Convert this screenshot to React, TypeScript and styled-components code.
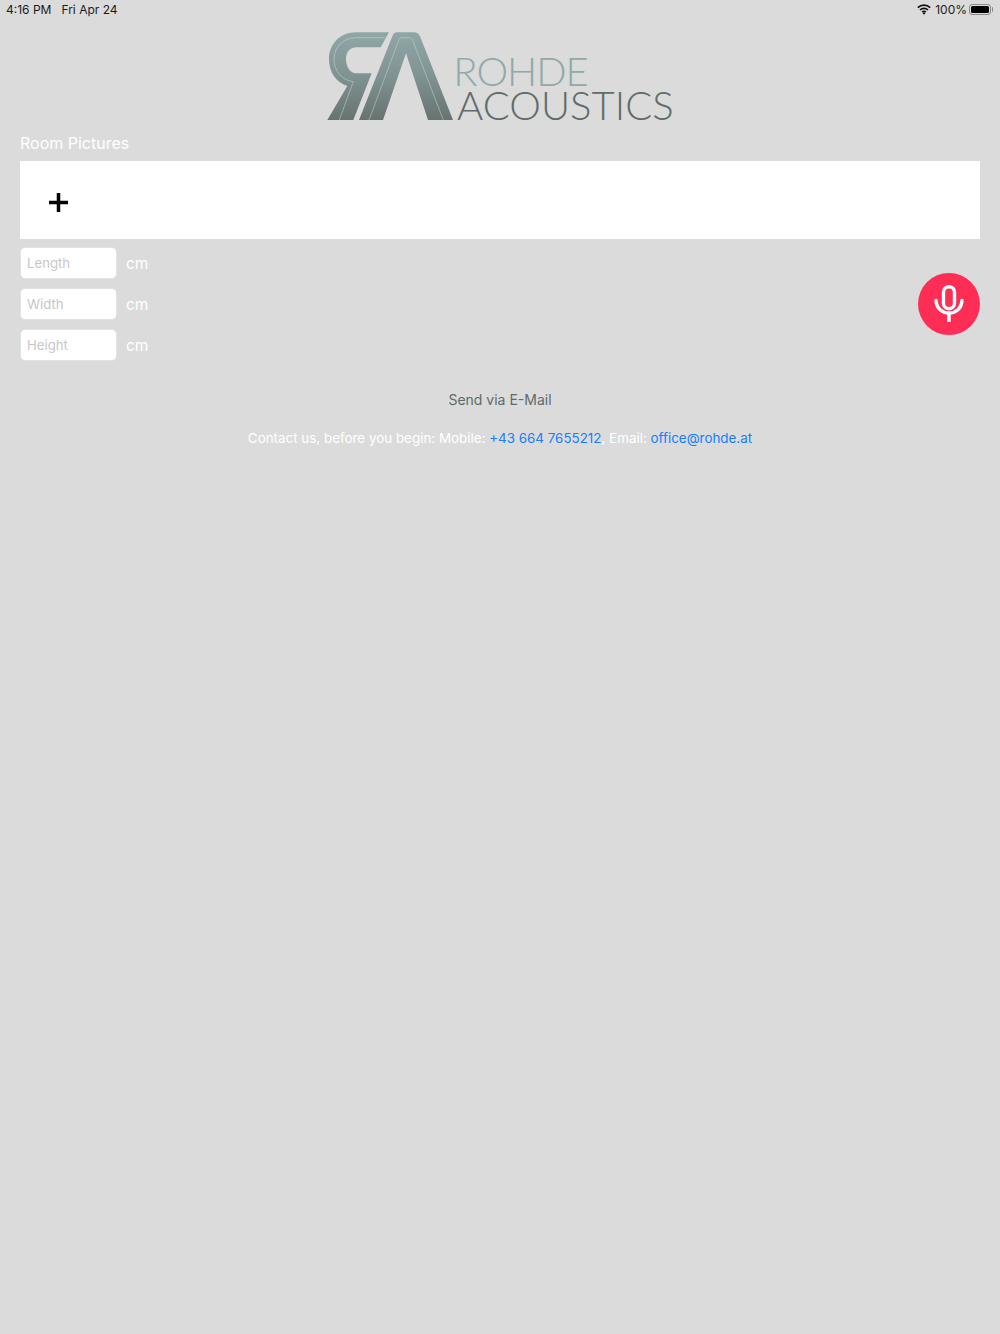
import React from 'react';
import styled, { createGlobalStyle } from 'styled-components';

const GlobalStyle = createGlobalStyle`
  html, body {
    margin: 0;
    padding: 0;
    background: #dbdbdb;
  }
  * {
    box-sizing: border-box;
  }
`;

const Page = styled.div`
  position: relative;
  width: 1000px;
  height: 1334px;
  background: #dbdbdb;
  font-family: Inter, 'Liberation Sans', sans-serif;
  overflow: hidden;
`;

const StatusBar = styled.div`
  display: flex;
  align-items: center;
  justify-content: space-between;
  height: 20px;
  padding: 0 9px 1px 6px;
  color: #1c1c1c;
  font-size: 12px;
`;

const StatusGroup = styled.div<{ $gap: number }>`
  display: flex;
  align-items: center;
  gap: ${(p) => p.$gap}px;
`;

const LogoRow = styled.div`
  display: flex;
  justify-content: center;
  margin-top: 5px;
  height: 100px;
`;

const Content = styled.div`
  padding: 8px 20px 0;
`;

const Title = styled.div`
  height: 20px;
  line-height: 20px;
  color: #fff;
  font-size: 16px;
`;

const PictureBox = styled.div`
  display: flex;
  align-items: center;
  height: 78px;
  margin-top: 8px;
  padding: 5px 0 0 29px;
  background: #fff;
`;

const Fields = styled.div`
  display: flex;
  flex-direction: column;
  gap: 9px;
  margin-top: 8px;
`;

const FieldRow = styled.div`
  display: flex;
  align-items: center;
  gap: 9px;
`;

const SizeInput = styled.input`
  width: 97px;
  height: 32px;
  padding: 0 6px 1px;
  border: 1px solid #e2e2e2;
  border-radius: 5px;
  background: #fff;
  outline: none;
  font-family: Inter, 'Liberation Sans', sans-serif;
  font-size: 13.2px;

  &::placeholder {
    color: #c7c7c9;
    opacity: 1;
  }
`;

const Unit = styled.span`
  color: #fff;
  font-size: 15.5px;
`;

const SendLine = styled.div`
  margin-top: 29px;
  height: 20px;
  line-height: 20px;
  text-align: center;
  color: #5e6a6b;
  font-size: 14px;
`;

const ContactLine = styled.div`
  margin-top: 18px;
  height: 20px;
  line-height: 20px;
  text-align: center;
  color: #fff;
  font-size: 13.4px;
`;

const ContactLink = styled.span`
  color: #157efb;
`;

const MicButton = styled.div`
  position: absolute;
  top: 273px;
  right: 20px;
  width: 62px;
  height: 62px;
  display: flex;
  align-items: center;
  justify-content: center;
  border-radius: 50%;
  background: #fd2d55;
`;

const BatteryShell = styled.div`
  position: relative;
  width: 22px;
  height: 11px;
  margin-left: -2px;
  padding: 1px;
  border: 1px solid #8a8a8a;
  border-radius: 3px;

  &::after {
    content: '';
    position: absolute;
    top: 2px;
    right: -3px;
    width: 1.5px;
    height: 5px;
    background: #8a8a8a;
    border-radius: 0 1px 1px 0;
  }
`;

const BatteryFill = styled.div`
  width: 100%;
  height: 100%;
  background: #000;
  border-radius: 1.5px;
`;

const LogoSvg = styled.svg`
  overflow: visible;
`;

const LogoLetters = styled.text<{ $fill: string }>`
  font-family: Lato, 'Open Sans', sans-serif;
  font-weight: 300;
  font-size: 120px;
  fill: ${(p) => p.$fill};
`;

const WifiIcon = () => (
  <svg width="14" height="11" viewBox="0 0 14 11" fill="none" stroke="#111" strokeWidth="1.7">
    <path d="M.8 3.6a9 9 0 0 1 12.4 0" />
    <path d="M3 6a5.8 5.8 0 0 1 8 0" />
    <path d="M5.2 8.2a2.6 2.6 0 0 1 3.6 0" />
    <path d="M7 10.800 5.600 9.300a2 2 0 0 1 2.800 0z" fill="#111" stroke="none" />
  </svg>
);

const Logo = () => (
  <LogoSvg width="360" height="100" viewBox="0 0 1080 300">
    <defs>
      <linearGradient id="logoShade" x1="0" y1="22" x2="0" y2="285" gradientUnits="userSpaceOnUse">
        <stop offset="0" stopColor="#90a7a7" />
        <stop offset="0.5" stopColor="#7f9392" />
        <stop offset="1" stopColor="#677370" />
      </linearGradient>
    </defs>
    <path
      d="M207 22H108C60 22 27 58 27 102C27 142 48 172 82 183L22 285H100L155 145H108C90 145 78 124 78 102C78 82 90 67 108 67H182Z"
      fill="url(#logoShade)"
    />
    <path
      d="M117 285H189L258 85L324 285H399L300 34C296 26 291 22 282 22H232C224 22 220 26 217 34Z"
      fill="url(#logoShade)"
    />
    <g fill="none" stroke="#c9d3d2" strokeWidth="1.6">
      <path d="M195 38H108C68 38 42 68 42 102C42 138 66 166 100 170L58 285" />
      <path d="M147 285L236 46C238 40 241 38 246 38H268C273 38 276 41 278 46L370 285" />
    </g>
    <LogoLetters $fill="#8faaa9" x="400" y="183" textLength="406" lengthAdjust="spacing">
      ROHDE
    </LogoLetters>
    <LogoLetters $fill="#616b69" x="411" y="285" textLength="650" lengthAdjust="spacing">
      ACOUSTICS
    </LogoLetters>
  </LogoSvg>
);

const PlusIcon = () => (
  <svg width="19" height="19" viewBox="0 0 19 19" stroke="#000" strokeWidth="3.5">
    <path d="M0 9.500H19M9.500 0V19" />
  </svg>
);

const MicIcon = () => (
  <svg width="30" height="38" viewBox="0 0 30 38" fill="none" stroke="#fff" strokeWidth="3.4" strokeLinecap="round">
    <rect x="9.500" y="1.700" width="11" height="22" rx="5.500" />
    <path d="M2 15.500c.6 8 6 12.500 13 12.500s12.400-4.500 13-12.500" />
    <path d="M15 28V37" strokeLinecap="butt" />
  </svg>
);

export default function App() {
  return (
    <Page>
      <GlobalStyle />
      <StatusBar>
        <StatusGroup $gap={10}>
          <span>4:16 PM</span>
          <span>Fri Apr 24</span>
        </StatusGroup>
        <StatusGroup $gap={4}>
          <WifiIcon />
          <span>100%</span>
          <BatteryShell>
            <BatteryFill />
          </BatteryShell>
        </StatusGroup>
      </StatusBar>
      <LogoRow>
        <Logo />
      </LogoRow>
      <Content>
        <Title>Room Pictures</Title>
        <PictureBox>
          <PlusIcon />
        </PictureBox>
        <Fields>
          {['Length', 'Width', 'Height'].map((name) => (
            <FieldRow key={name}>
              <SizeInput placeholder={name} />
              <Unit>cm</Unit>
            </FieldRow>
          ))}
        </Fields>
        <SendLine>Send via E-Mail</SendLine>
        <ContactLine>
          Contact us, before you begin: Mobile: <ContactLink>+43 664 7655212</ContactLink>, Email:{' '}
          <ContactLink>office@rohde.at</ContactLink>
        </ContactLine>
      </Content>
      <MicButton>
        <MicIcon />
      </MicButton>
    </Page>
  );
}
